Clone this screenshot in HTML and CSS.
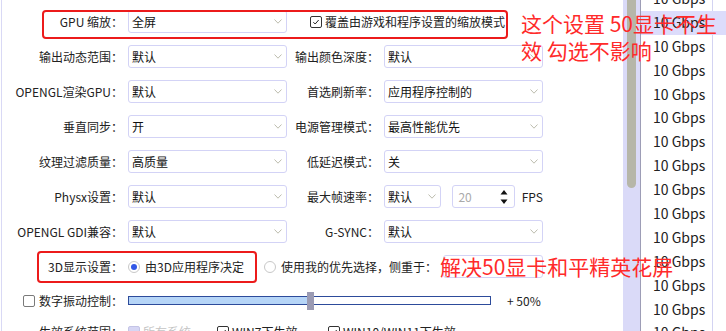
FILE: index.html
```html
<!DOCTYPE html>
<html lang="zh">
  <head>
    <meta charset="UTF-8" />
    <title>显卡设置</title>
    <link rel="stylesheet" href="styles.css">
  </head>
  <body>
    <div class="screen">
      <div class="settings">
        <div class="row">
          <span class="label">GPU 缩放：</span>
          <div class="select">全屏<svg class="chev" viewBox="0 0 8 5"><path d="M0.5 0.5 L4 4.2 L7.5 0.5"/></svg></div>
          <div class="check wide"><span class="box on"><svg viewBox="0 0 12 12"><path d="M2.8 6.2 L5 8.4 L9.2 3.6"/></svg></span>覆盖由游戏和程序设置的缩放模式</div>
        </div>
        <div class="row">
          <span class="label">输出动态范围：</span>
          <div class="select">默认<svg class="chev" viewBox="0 0 8 5"><path d="M0.5 0.5 L4 4.2 L7.5 0.5"/></svg></div>
          <span class="label">输出颜色深度：</span>
          <div class="select">默认<svg class="chev" viewBox="0 0 8 5"><path d="M0.5 0.5 L4 4.2 L7.5 0.5"/></svg></div>
        </div>
        <div class="row">
          <span class="label">OPENGL渲染GPU：</span>
          <div class="select">默认<svg class="chev" viewBox="0 0 8 5"><path d="M0.5 0.5 L4 4.2 L7.5 0.5"/></svg></div>
          <span class="label">首选刷新率：</span>
          <div class="select">应用程序控制的<svg class="chev" viewBox="0 0 8 5"><path d="M0.5 0.5 L4 4.2 L7.5 0.5"/></svg></div>
        </div>
        <div class="row">
          <span class="label">垂直同步：</span>
          <div class="select">开<svg class="chev" viewBox="0 0 8 5"><path d="M0.5 0.5 L4 4.2 L7.5 0.5"/></svg></div>
          <span class="label">电源管理模式：</span>
          <div class="select">最高性能优先<svg class="chev" viewBox="0 0 8 5"><path d="M0.5 0.5 L4 4.2 L7.5 0.5"/></svg></div>
        </div>
        <div class="row">
          <span class="label">纹理过滤质量：</span>
          <div class="select">高质量<svg class="chev" viewBox="0 0 8 5"><path d="M0.5 0.5 L4 4.2 L7.5 0.5"/></svg></div>
          <span class="label">低延迟模式：</span>
          <div class="select">关<svg class="chev" viewBox="0 0 8 5"><path d="M0.5 0.5 L4 4.2 L7.5 0.5"/></svg></div>
        </div>
        <div class="row">
          <span class="label">Physx设置：</span>
          <div class="select">默认<svg class="chev" viewBox="0 0 8 5"><path d="M0.5 0.5 L4 4.2 L7.5 0.5"/></svg></div>
          <span class="label">最大帧速率：</span>
          <div class="fps">
            <div class="select small">默认<svg class="chev" viewBox="0 0 8 5"><path d="M0.5 0.5 L4 4.2 L7.5 0.5"/></svg></div>
            <div class="spin">20<svg class="arrows" viewBox="0 0 8 16"><path d="M4 1 L7.5 5.5 L0.5 5.5 Z M0.5 10.5 L7.5 10.5 L4 15 Z"/></svg></div>
            <span class="unit">FPS</span>
          </div>
        </div>
        <div class="row">
          <span class="label">OPENGL GDI兼容：</span>
          <div class="select">默认<svg class="chev" viewBox="0 0 8 5"><path d="M0.5 0.5 L4 4.2 L7.5 0.5"/></svg></div>
          <span class="label">G-SYNC：</span>
          <div class="select">默认<svg class="chev" viewBox="0 0 8 5"><path d="M0.5 0.5 L4 4.2 L7.5 0.5"/></svg></div>
        </div>
        <div class="row row-3d">
          <span class="label">3D显示设置：</span>
          <div class="radio"><span class="dot on"></span>由3D应用程序决定</div>
          <div class="radio"><span class="dot"></span>使用我的优先选择，侧重于：</div>
          <div class="select"></div>
        </div>
        <div class="line vibrance">
          <span class="label"><span class="box"></span>数字振动控制：</span>
          <div class="slider">
            <div class="fill"></div>
            <div class="knob"></div>
          </div>
          <span class="value">+ 50%</span>
        </div>
        <div class="line systems">
          <span class="label">生效系统范围：</span>
          <div class="check off"><span class="box"></span>所有系统</div>
          <div class="check win7"><span class="box on"><svg viewBox="0 0 12 12"><path d="M2.8 6.2 L5 8.4 L9.2 3.6"/></svg></span>WIN7下生效</div>
          <div class="check"><span class="box on"><svg viewBox="0 0 12 12"><path d="M2.8 6.2 L5 8.4 L9.2 3.6"/></svg></span>WIN10/WIN11下生效</div>
        </div>
      </div>

      <div class="scroll"><div class="thumb"></div></div>

      <div class="speeds">
        <div class="item">10 Gbps</div>
        <div class="item hover">10 Gbps</div>
        <div class="item">10 Gbps</div>
        <div class="item">10 Gbps</div>
        <div class="item">10 Gbps</div>
        <div class="item">10 Gbps</div>
        <div class="item">10 Gbps</div>
        <div class="item">10 Gbps</div>
        <div class="item">10 Gbps</div>
        <div class="item">10 Gbps</div>
        <div class="item">10 Gbps</div>
        <div class="item">10 Gbps</div>
        <div class="item">10 Gbps</div>
        <div class="item">10 Gbps</div>
        <div class="item">10 Gbps</div>
      </div>

      <div class="mark mark-gpu"></div>
      <div class="mark mark-3d"></div>
      <div class="note note-top">这个设置 50显卡不生<br>效 勾选不影响</div>
      <div class="note note-3d">解决50显卡和平精英花屏</div>
    </div>
  </body>
</html>
```

FILE: styles.css
```css
body {
  margin: 0;
  font-family: "Noto Sans CJK SC", sans-serif;
  font-size: 12px;
  color: #222;
  background: #fff;
  overflow: hidden;
}
.screen {
  position: relative;
  display: flex;
  width: 726px;
  height: 331px;
  overflow: hidden;
  background: #fff;
}

/* left settings panel */
.settings {
  width: 621px;
  margin-left: 1px;
  border-left: 1px solid #d9d9f5;
  padding-top: 10px;
  display: flex;
  flex-direction: column;
  gap: 12px;
  flex-shrink: 0;
}
.row {
  display: grid;
  grid-template-columns: 126px 159px 97px 159px;
  height: 23px;
  align-items: center;
  flex-shrink: 0;
}
.row-3d {
  grid-template-columns: 126px 136px 179px 100px;
}
.label {
  text-align: right;
  padding-right: 5px;
  white-space: nowrap;
}
.select {
  box-sizing: border-box;
  height: 23px;
  border: 1px solid #d3d3f6;
  border-radius: 3px;
  padding: 0 4px 0 3px;
  display: flex;
  align-items: center;
  justify-content: space-between;
  color: #111;
  background: #fff;
}
.chev {
  width: 8px;
  height: 5px;
  margin-left: auto;
}
.chev path {
  fill: none;
  stroke: #bdbdae;
  stroke-width: 1;
}

/* checkboxes */
.check {
  display: flex;
  align-items: center;
  gap: 3px;
  white-space: nowrap;
}
.wide {
  grid-column: 3 / 5;
  padding-left: 23px;
}
.box {
  box-sizing: border-box;
  width: 12px;
  height: 12px;
  border: 1px solid #7a7a7a;
  border-radius: 2px;
  background: #fff;
  flex-shrink: 0;
  display: inline-block;
}
.box.on {
  border-color: #333;
}
.box svg {
  display: block;
  width: 10px;
  height: 10px;
}
.box svg path {
  fill: none;
  stroke: #222;
  stroke-width: 1.2;
}

/* frame rate */
.fps {
  display: flex;
  align-items: center;
}
.select.small {
  width: 59px;
}
.spin {
  box-sizing: border-box;
  width: 64px;
  height: 23px;
  margin-left: 11px;
  border: 1px solid #d3d3f6;
  border-radius: 3px;
  padding: 0 6px 0 5px;
  display: flex;
  align-items: center;
  justify-content: space-between;
  color: #aaa;
}
.arrows {
  width: 8px;
  height: 16px;
}
.arrows path {
  fill: #111;
}
.unit {
  margin-left: 7px;
}

/* radios */
.radio {
  display: flex;
  align-items: center;
  gap: 5px;
  white-space: nowrap;
}
.dot {
  box-sizing: border-box;
  width: 12px;
  height: 12px;
  border: 1px solid #c8c8c8;
  border-radius: 50%;
  display: flex;
  align-items: center;
  justify-content: center;
}
.dot.on::after {
  content: "";
  width: 6px;
  height: 6px;
  border-radius: 50%;
  background: #3157e6;
}

/* vibrance slider */
.line {
  display: flex;
  align-items: center;
  height: 23px;
  flex-shrink: 0;
}
.line .label {
  width: 126px;
  box-sizing: border-box;
  flex-shrink: 0;
}
.vibrance {
  margin-top: -1px;
}
.vibrance .label {
  display: flex;
  justify-content: flex-end;
  align-items: center;
  gap: 4px;
}
.slider {
  box-sizing: border-box;
  width: 363px;
  height: 9px;
  border: 1px solid #2d4b9b;
  display: flex;
  align-items: center;
  background: #fff;
}
.fill {
  width: 178px;
  height: 100%;
  background: #b6d5f7;
}
.knob {
  width: 7px;
  height: 18px;
  background: #9b9bb3;
  flex-shrink: 0;
}
.value {
  margin-left: 16px;
}
.systems {
  margin-top: -4px;
}
.check.off {
  color: #c4c4c4;
  width: 89px;
}
.check.off .box {
  background: #d6d6f4;
  border-color: #c4c4e6;
}
.check.win7 {
  width: 111px;
}

/* scrollbar and speed list */
.scroll {
  width: 17px;
  flex-shrink: 0;
  background: #dadaf8;
}
.thumb {
  width: 9px;
  height: 188px;
  margin-left: 4px;
  background: #b6b6a9;
  border-radius: 0 0 5px 5px;
}
.speeds {
  width: 85px;
  flex-shrink: 0;
  border-left: 1px solid #9d9db6;
  margin-top: -13px;
  background: linear-gradient(to right, transparent 71px, #d3d3f2 71px, #d3d3f2 72px, transparent 72px);
}
.item {
  height: 23.9px;
  line-height: 23.9px;
  padding-left: 12px;
  font-size: 14px;
  color: #222;
  white-space: nowrap;
}
.item.hover {
  background: #dcdcfb;
}

/* red annotations */
.mark {
  position: absolute;
  box-sizing: border-box;
  border: 2px solid #ec1b1b;
  border-radius: 4px;
}
.mark-gpu {
  left: 42px;
  top: 10px;
  width: 466px;
  height: 29px;
}
.mark-3d {
  left: 37px;
  top: 251px;
  width: 220px;
  height: 32px;
}
.note {
  position: absolute;
  color: #ff2a2a;
  font-size: 21px;
  line-height: 27px;
  white-space: nowrap;
}
.note-top {
  left: 521px;
  top: 10px;
}
.note-3d {
  left: 440px;
  top: 253px;
}
```
